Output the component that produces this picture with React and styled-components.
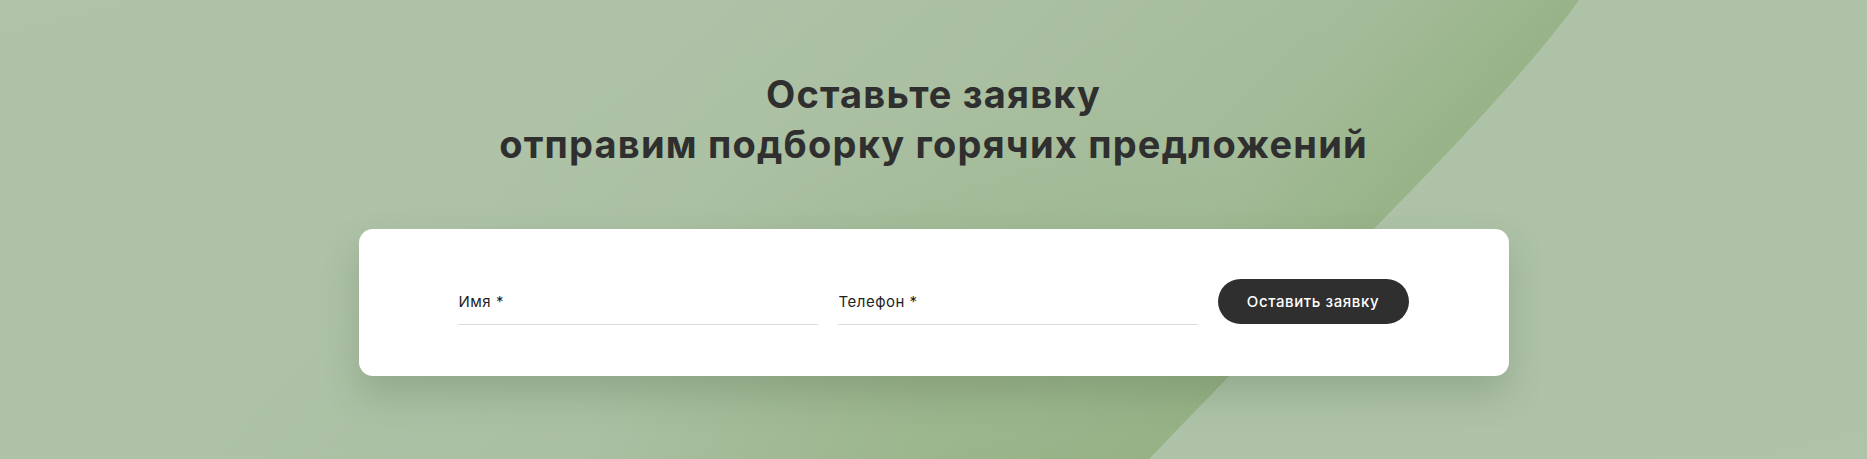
import React from "react";
import styled, { createGlobalStyle } from "styled-components";

const GlobalStyle = createGlobalStyle`
  html, body { margin: 0; padding: 0; }
  body { font-family: Inter, "Noto Sans", sans-serif; background: #aec2a7; }
  * { box-sizing: border-box; }
`;

const Section = styled.section`
  position: relative;
  width: 100%;
  height: 459px;
  overflow: hidden;
  background: #aec2a7;
`;

const Backdrop = styled.svg`
  position: absolute;
  inset: 0;
  width: 100%;
  height: 100%;
  z-index: 0;
`;

const Content = styled.div`
  position: relative;
  z-index: 1;
  display: flex;
  flex-direction: column;
  align-items: center;
  padding-top: 69px;
`;

const Title = styled.h2`
  margin: 0;
  font-family: Inter, "Noto Sans", sans-serif;
  font-weight: 700;
  font-size: 38px;
  line-height: 50px;
  letter-spacing: 1.2px;
  color: #2f2f2f;
  text-align: center;
`;

const Card = styled.form`
  margin-top: 60px;
  width: 1150px;
  background: #ffffff;
  border-radius: 14px;
  padding: 50px 101px 51px 99px;
  display: flex;
  align-items: flex-start;
  gap: 20px;
  box-shadow: 0 18px 36px rgba(60, 80, 50, 0.22);
`;

const Field = styled.label`
  flex: 0 0 360px;
  height: 46px;
  display: flex;
  align-items: center;
  border-bottom: 1px solid #dcdcdc;
  font-family: Inter, "Noto Sans", sans-serif;
  font-size: 15px;
  color: #1f1f1f;
`;

const Input = styled.input`
  width: 100%;
  height: 100%;
  border: none;
  outline: none;
  padding: 0 0 0 1px;
  background: transparent;
  font-family: inherit;
  font-size: 15px;
  letter-spacing: 0.5px;
  color: #1f1f1f;
  &::placeholder { color: #1f1f1f; opacity: 1; }
`;

const SubmitButton = styled.button`
  flex: 0 0 191px;
  height: 45px;
  border: none;
  border-radius: 23px;
  background: #2f2f2f;
  color: #ffffff;
  font-family: Inter, "Noto Sans", sans-serif;
  font-weight: 500;
  font-size: 15px;
  letter-spacing: 0.6px;
  cursor: pointer;
`;

export default function App() {
  return (
    <>
      <GlobalStyle />
      <Section>
        <Backdrop viewBox="0 0 1867 459" preserveAspectRatio="none" aria-hidden="true">
          <defs>
            <linearGradient id="baseGrad" x1="0" y1="0" x2="1" y2="1">
              <stop offset="0" stopColor="#b0c3a9" />
              <stop offset="0.5" stopColor="#adc2a6" />
              <stop offset="1" stopColor="#afc3a9" />
            </linearGradient>
            <linearGradient id="bandGrad" gradientUnits="userSpaceOnUse" x1="853" y1="-246" x2="1364" y2="230">
              <stop offset="0" stopColor="#8dab78" stopOpacity="0" />
              <stop offset="0.45" stopColor="#8dab78" stopOpacity="0.12" />
              <stop offset="0.8" stopColor="#8dab78" stopOpacity="0.3" />
              <stop offset="1" stopColor="#8dab78" stopOpacity="0.55" />
            </linearGradient>
            <radialGradient id="bottomGlow" cx="980" cy="480" r="400" gradientUnits="userSpaceOnUse">
              <stop offset="0" stopColor="#8fad7b" stopOpacity="0.5" />
              <stop offset="1" stopColor="#8fad7b" stopOpacity="0" />
            </radialGradient>
            <linearGradient id="edgeGlow" gradientUnits="userSpaceOnUse" x1="1290" y1="140" x2="1420" y2="260">
              <stop offset="0" stopColor="#8fad7b" stopOpacity="0" />
              <stop offset="1" stopColor="#8fad7b" stopOpacity="0.35" />
            </linearGradient>
          </defs>
          <rect x="0" y="0" width="1867" height="459" fill="url(#baseGrad)" />
          <path d="M1579 0 C1500 110 1320 280 1149 459 L0 459 L0 0 Z" fill="url(#bandGrad)" />
          <path d="M1579 0 C1500 110 1320 280 1149 459 L0 459 L0 0 Z" fill="url(#bottomGlow)" />
          <path d="M1579 0 C1500 110 1320 280 1149 459 L0 459 L0 0 Z" fill="url(#edgeGlow)" />
        </Backdrop>
        <Content>
          <Title>
            Оставьте заявку
            <br />
            отправим подборку горячих предложений
          </Title>
          <Card onSubmit={(e) => e.preventDefault()}>
            <Field>
              <Input type="text" placeholder="Имя *" />
            </Field>
            <Field>
              <Input type="tel" placeholder="Телефон *" />
            </Field>
            <SubmitButton type="submit">Оставить заявку</SubmitButton>
          </Card>
        </Content>
      </Section>
    </>
  );
}
